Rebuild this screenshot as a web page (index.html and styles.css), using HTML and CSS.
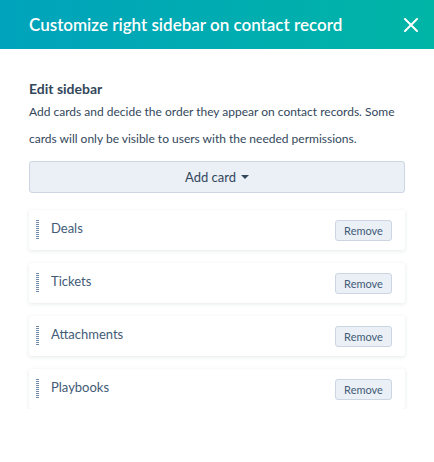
FILE: index.html
```html
<!DOCTYPE html>
<html>
<head>
<meta charset="utf-8">
<link rel="stylesheet" href="styles.css">
</head>
<body>
<div class="panel">
  <header class="header">
    <h1 class="title">Customize right sidebar on contact record</h1>
    <button class="close" aria-label="Close">
      <svg width="14" height="14" viewBox="0 0 14 14"><path d="M1 1L13 13M13 1L1 13" stroke="#fff" stroke-width="2" stroke-linecap="round"/></svg>
    </button>
  </header>
  <main class="content">
    <h2 class="section-title">Edit sidebar</h2>
    <p class="desc">Add cards and decide the order they appear on contact records. Some cards will only be visible to users with the needed permissions.</p>
    <button class="add-card">Add card <span class="caret"></span></button>
    <ul class="cards">
      <li class="card"><span class="handle"></span><span class="card-name">Deals</span><button class="remove">Remove</button></li>
      <li class="card"><span class="handle"></span><span class="card-name">Tickets</span><button class="remove">Remove</button></li>
      <li class="card"><span class="handle"></span><span class="card-name">Attachments</span><button class="remove">Remove</button></li>
      <li class="card"><span class="handle"></span><span class="card-name">Playbooks</span><button class="remove">Remove</button></li>
    </ul>
  </main>
</div>
</body>
</html>
```
FILE: styles.css
```css
* { box-sizing: border-box; }
body {
  margin: 0;
  font-family: Lato, "Noto Sans", sans-serif;
  color: #33475b;
  background: #fff;
}
.header {
  height: 49px;
  display: flex;
  align-items: center;
  justify-content: space-between;
  padding: 0 16px 0 29px;
  background: linear-gradient(to right, #00a3bc, #00b5a6);
}
.title {
  margin: 0;
  font-size: 17px;
  font-weight: 600;
  color: #fff;
}
.close {
  border: 0;
  background: none;
  padding: 0;
  width: 14px;
  height: 14px;
  display: flex;
}
.content {
  padding: 30px 29px 0;
}
.section-title {
  margin: 0;
  font-size: 14px;
  font-weight: 700;
  line-height: 20px;
}
.desc {
  margin: -1px 0 0;
  font-size: 12px;
  line-height: 27px;
  color: #33475b;
}
.add-card {
  margin-top: 9px;
  width: 100%;
  height: 32px;
  background: #eaf0f6;
  border: 1px solid #cbd6e2;
  border-radius: 3px;
  font-family: inherit;
  font-size: 13px;
  color: #33475b;
  display: flex;
  align-items: center;
  justify-content: center;
  gap: 5px;
}
.caret {
  width: 0;
  height: 0;
  border-left: 4px solid transparent;
  border-right: 4px solid transparent;
  border-top: 4px solid #33475b;
}
.cards {
  list-style: none;
  margin: 17px 0 0;
  padding: 0;
  display: flex;
  flex-direction: column;
  gap: 13px;
}
.card {
  height: 40px;
  display: flex;
  align-items: center;
  padding: 0 13px 0 7px;
  background: #fff;
  border-radius: 3px;
  box-shadow: 0 1px 4px rgba(45, 62, 80, 0.12);
}
.handle {
  width: 3px;
  height: 19px;
  margin-top: -1px;
  background-image: repeating-linear-gradient(to bottom, #6f8aa8 0 1px, transparent 1px 2px);
}
.card-name {
  flex: 1;
  margin-left: 12px;
  margin-top: -4px;
  font-size: 13px;
  color: #425b76;
}
.remove {
  width: 57px;
  height: 21px;
  padding: 0;
  background: #eaf0f6;
  border: 1px solid #cbd6e2;
  border-radius: 3px;
  font-family: inherit;
  font-size: 11px;
  color: #425b76;
}
```
